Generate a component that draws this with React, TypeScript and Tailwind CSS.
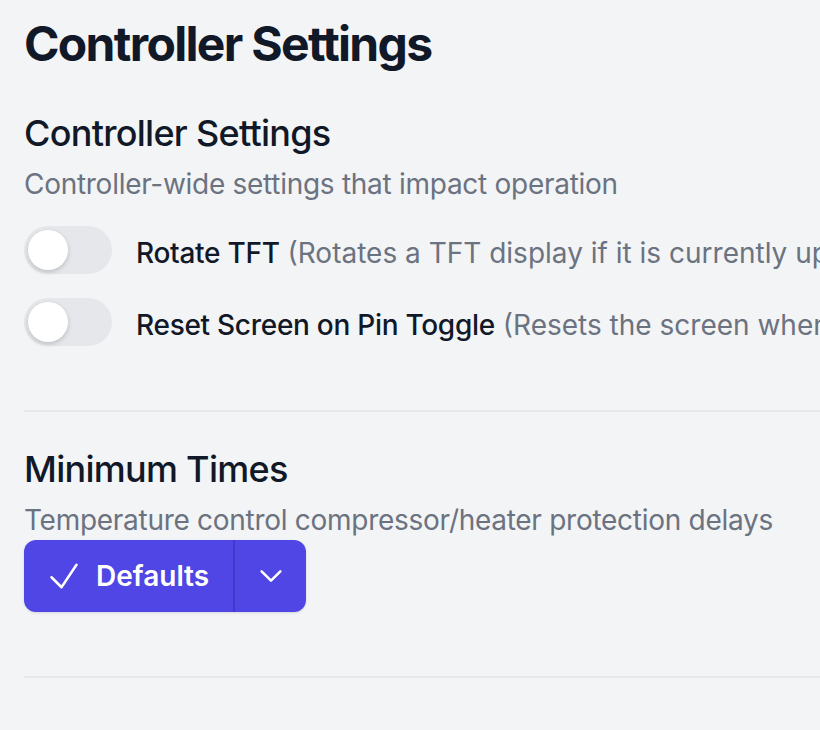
const Toggle = () => (
  <div className="relative h-[48px] w-[88px] shrink-0 rounded-full bg-[#e5e7eb]">
    <span className="absolute left-[4px] top-[4px] h-[40px] w-[40px] rounded-full bg-white shadow-[0_2px_5px_rgba(0,0,0,0.18)]" />
  </div>
);

const SettingRow = ({ label, hint }: { label: string; hint: string }) => (
  <div className="flex items-center gap-6">
    <Toggle />
    <p className="mt-[6px] whitespace-nowrap text-[28px] leading-[40px]">
      <span className="font-medium tracking-[-0.01em] text-[#111827]">{label}</span>{' '}
      <span className="text-[#6b7280]">{hint}</span>
    </p>
  </div>
);

export default function App() {
  return (
    <div className="h-[730px] w-[820px] overflow-hidden bg-[#f3f4f6] font-['Inter',sans-serif]">
      <div className="w-[1400px] pl-6 pt-3">
        <h1 className="text-[48px] font-bold leading-[64px] tracking-[-0.035em] text-[#111827]">Controller Settings</h1>

        <section className="mt-[29px] border-b-2 border-[#e5e7eb] pb-16">
          <h2 className="text-[36px] font-medium leading-[56px] tracking-[-0.02em] text-[#111827]">Controller Settings</h2>
          <p className="mt-[3px] text-[28px] leading-[40px] tracking-[-0.01em] text-[#6b7280]">
            Controller-wide settings that impact operation
          </p>
          <div className="mt-[22px] flex flex-col gap-6">
            <SettingRow label="Rotate TFT" hint="(Rotates a TFT display if it is currently upside down)" />
            <SettingRow label="Reset Screen on Pin Toggle" hint="(Resets the screen when a pin is toggled)" />
          </div>
        </section>

        <section className="mt-[29px] border-b-2 border-[#e5e7eb] pb-16">
          <h2 className="text-[36px] font-medium leading-[56px] tracking-[-0.02em] text-[#111827]">Minimum Times</h2>
          <p className="mt-[3px] text-[28px] leading-[40px] tracking-[-0.01em] text-[#6b7280]">
            Temperature control compressor/heater protection delays
          </p>
          <div className="inline-flex h-[72px] overflow-hidden rounded-xl bg-[#4f46e5] text-white shadow-sm">
            <button className="flex items-center gap-3 pl-5 pr-6 text-[28px] font-semibold">
              <svg viewBox="0 0 24 24" fill="none" stroke="currentColor" strokeWidth={1.5} className="h-10 w-10">
                <path strokeLinecap="round" strokeLinejoin="round" d="m4.5 12.75 6 6 9-13.5" />
              </svg>
              Defaults
            </button>
            <button className="flex w-[73px] items-center justify-center border-l-2 border-[#4338ca]">
              <svg viewBox="0 0 24 24" fill="none" stroke="currentColor" strokeWidth={2} className="h-[30px] w-[30px]">
                <path strokeLinecap="round" strokeLinejoin="round" d="m19.5 8.25-7.5 7.5-7.5-7.5" />
              </svg>
            </button>
          </div>
        </section>
      </div>
    </div>
  );
}
